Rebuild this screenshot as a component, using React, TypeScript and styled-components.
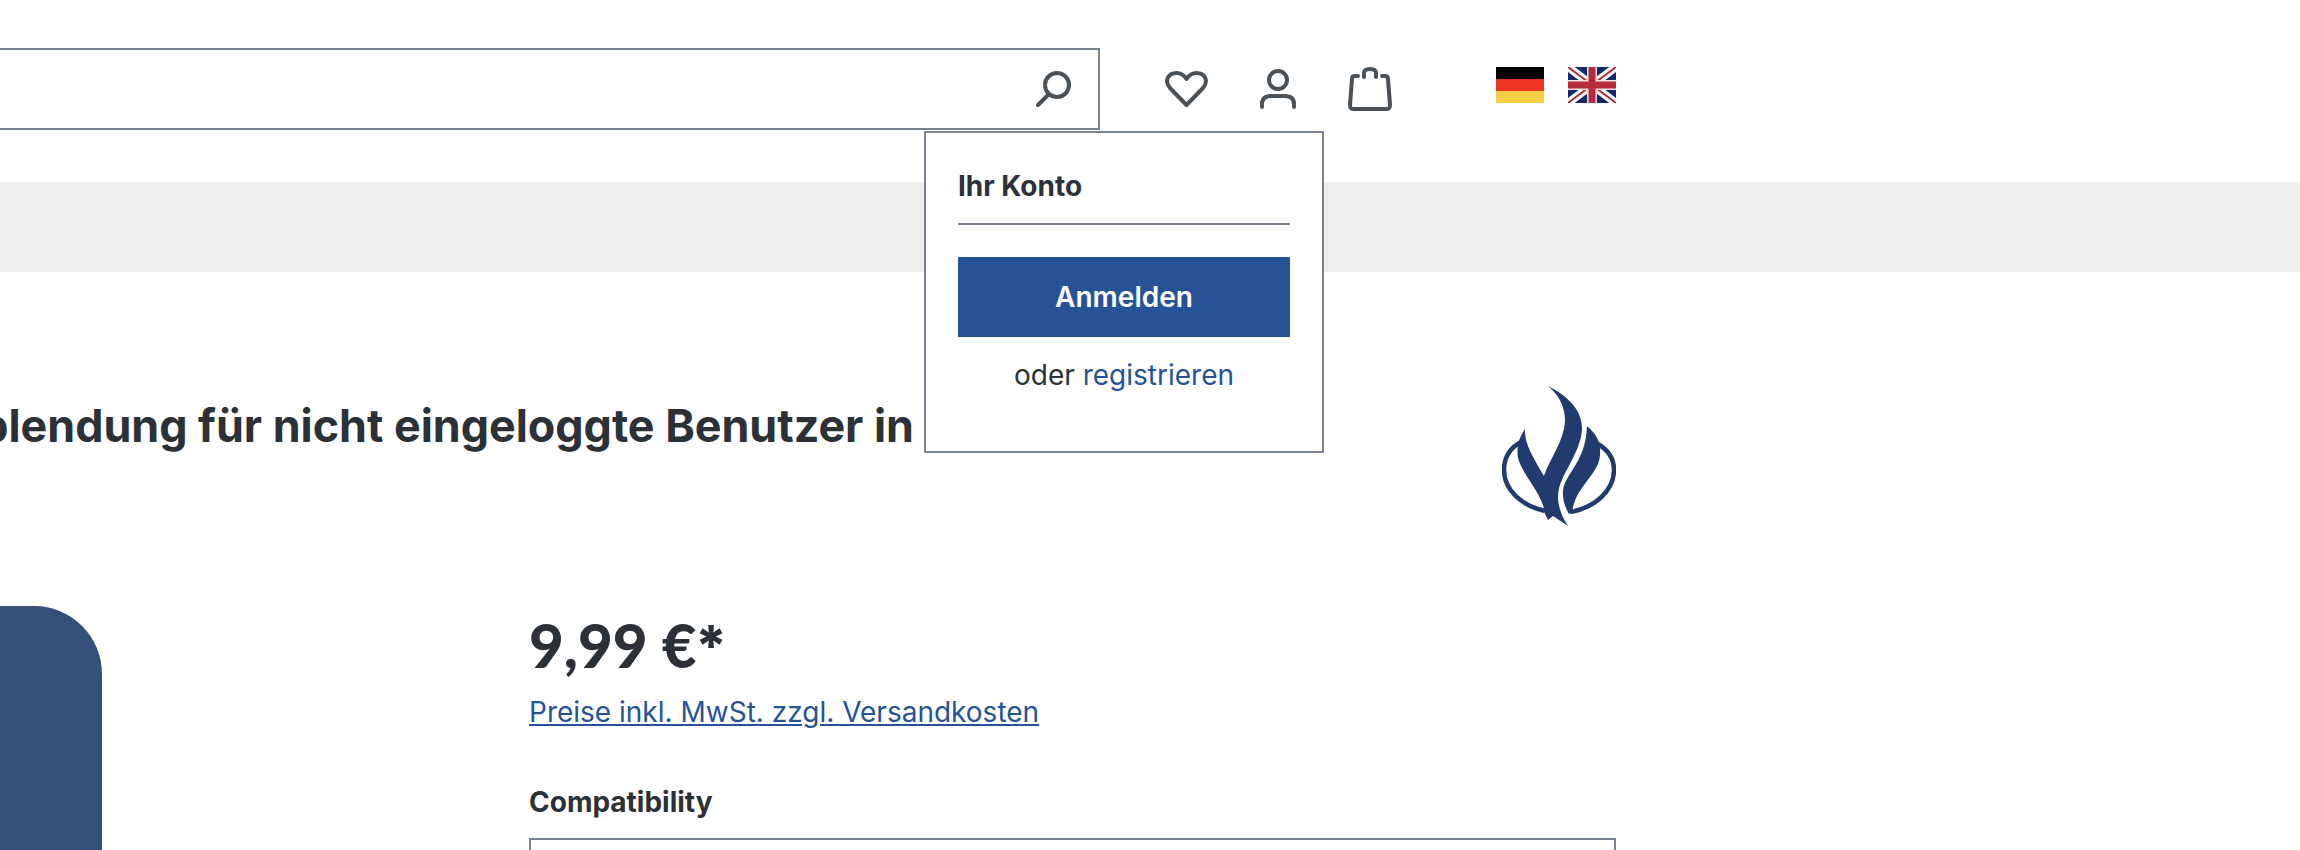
import React from "react";
import styled, { createGlobalStyle } from "styled-components";

const GlobalStyle = createGlobalStyle`
  html, body {
    margin: 0;
    padding: 0;
    background: #fff;
  }
  body {
    font-family: Inter, "Liberation Sans", sans-serif;
    color: #2b3136;
  }
`;

const Page = styled.div`
  width: 2300px;
  height: 850px;
  overflow: hidden;
  position: relative;
`;

const Header = styled.header`
  width: 1616px;
  height: 182px;
  padding-top: 48px;
  box-sizing: border-box;
  display: flex;
  align-items: flex-start;
`;

const SearchBox = styled.div`
  width: 1100px;
  height: 82px;
  flex: none;
  box-sizing: border-box;
  border: 2px solid #798490;
  border-left: 0;
  display: flex;
  align-items: center;
  justify-content: flex-end;
  padding-right: 26px;
`;

const IconRow = styled.div`
  display: flex;
  align-items: center;
  flex: none;
  height: 82px;
  margin-left: 65px;
  gap: 52px;
`;

const Flags = styled.div`
  display: flex;
  flex: none;
  gap: 24px;
  margin-left: 104px;
  margin-top: 19px;
`;

const NavBand = styled.div`
  height: 90px;
  background: #eeeeee;
`;

const Main = styled.main`
  width: 1616px;
`;

const TitleRow = styled.div`
  height: 334px;
  display: flex;
  justify-content: space-between;
  align-items: flex-start;
`;

const Title = styled.h1`
  width: 914px;
  margin: 132px 0 0;
  display: flex;
  justify-content: flex-end;
  font-size: 44.8px;
  line-height: 1;
  font-weight: 700;
  white-space: nowrap;
  color: #2b3136;
`;

const Logo = styled.svg`
  width: 114px;
  height: 140px;
  margin-top: 114px;
`;

const Product = styled.div`
  display: flex;
`;

const Gallery = styled.div`
  width: 102px;
  height: 244px;
  flex: none;
  background: #344f78;
  border-top-right-radius: 68px;
`;

const Details = styled.div`
  margin-left: 427px;
  flex: 1;
`;

const Price = styled.div`
  font-family: Lato, Inter, sans-serif;
  font-size: 60px;
  line-height: 60px;
  font-weight: 900;
  margin-top: 9px;
`;

const PriceMark = styled.span`
  font-family: Inter, sans-serif;
  font-size: 56px;
  line-height: 0;
  font-weight: 800;
  vertical-align: 2px;
  margin-left: -2px;
`;

const TaxLink = styled.a`
  display: block;
  margin-top: 19px;
  font-size: 28px;
  line-height: 36px;
  color: #265396;
  text-decoration: underline;
`;

const OptionLabel = styled.div`
  margin-top: 54px;
  font-size: 28px;
  line-height: 36px;
  font-weight: 700;
`;

const OptionSelect = styled.div`
  margin-top: 18px;
  height: 80px;
  box-sizing: border-box;
  border: 2px solid #798490;
`;

const AccountMenu = styled.div`
  position: absolute;
  left: 924px;
  top: 131px;
  width: 400px;
  height: 322px;
  box-sizing: border-box;
  background: #fff;
  border: 2px solid #798490;
  padding: 32px;
`;

const MenuTitle = styled.div`
  font-size: 28px;
  line-height: 42px;
  font-weight: 700;
  padding-bottom: 16px;
  border-bottom: 2px solid #798490;
`;

const LoginButton = styled.button`
  display: block;
  width: 100%;
  height: 80px;
  margin-top: 32px;
  border: 0;
  border-radius: 0;
  background: #265396;
  color: #fff;
  font-family: inherit;
  font-size: 28px;
  font-weight: 600;
`;

const RegisterLine = styled.div`
  margin-top: 20px;
  text-align: center;
  font-size: 28px;
  line-height: 36px;
`;

const RegisterLink = styled.a`
  color: #265396;
`;

const stroke = {
  fill: "none",
  stroke: "#4a5157",
  strokeWidth: 4,
  strokeLinecap: "round" as const,
  strokeLinejoin: "round" as const,
};

function App() {
  return (
    <Page>
      <GlobalStyle />
      <Header>
        <SearchBox>
          <svg width="36" height="36" viewBox="0 0 36 36">
            <circle cx="21" cy="14" r="12" {...stroke} />
            <path d="M12 24L2 34" {...stroke} />
          </svg>
        </SearchBox>
        <IconRow>
          <svg width="43" height="36" viewBox="0 0 43 36">
            <path
              d="M21.500 34L5 17C-1 10 3 2 11.500 2C16 2 19.500 5 21.500 8C23.500 5 27 2 31.500 2C40 2 44 10 38 17Z"
              {...stroke}
            />
          </svg>
          <svg width="36" height="40" viewBox="0 0 36 40">
            <circle cx="18" cy="11" r="9" {...stroke} />
            <path d="M2 38V35C2 29 6 27 11 27H25C30 27 34 29 34 35V38" {...stroke} />
          </svg>
          <svg width="44" height="44" viewBox="0 0 44 44">
            <path
              d="M10 9H7C5 9 4 10 4 12L2 38C2 41 3 42 6 42H38C41 42 42 41 42 38L40 12C40 10 39 9 37 9H34M16 10V6C16 3 18 2 22 2C26 2 28 3 28 6V10"
              {...stroke}
            />
          </svg>
        </IconRow>
        <Flags>
          <svg width="48" height="36" viewBox="0 0 48 36">
            <rect width="48" height="12" fill="#000" />
            <rect y="12" width="48" height="12" fill="#ee3524" />
            <rect y="24" width="48" height="12" fill="#f9cf47" />
          </svg>
          <svg width="48" height="36" viewBox="0 0 48 36">
            <rect width="48" height="36" fill="#0f2a6b" />
            <path d="M0 0L48 36M48 0L0 36" stroke="#fff" strokeWidth="8" />
            <path d="M0 0L48 36M48 0L0 36" stroke="#b72c3c" strokeWidth="2" />
            <path d="M24 0V36M0 18H48" stroke="#f3dfe1" strokeWidth="10" />
            <path d="M24 0V36M0 18H48" stroke="#b72c3c" strokeWidth="7" />
          </svg>
        </Flags>
      </Header>
      <NavBand />
      <Main>
        <TitleRow>
          <Title>blendung für nicht eingeloggte Benutzer in</Title>
          <Logo viewBox="0 0 114 140">
            <path
              fill="#213b6e"
              d="M46 0C66 10 80 24 80 42C80 60 66 80 60 94C54 106 54 122 66 140C60 136 54 132 51 130L46 134L43 128C41 108 22 92 16 72C14 60 18 50 23 43C22 56 30 70 42 90C48 72 62 56 63 34C63 20 56 8 46 0Z"
            />
            <path
              fill="#213b6e"
              d="M85 40C94 48 99 56 98 66C99 80 88 90 80 102C74 110 71 118 70 127L67 128C61 118 59 106 63 97C70 82 84 70 85 40Z"
            />
            <path
              fill="none"
              stroke="#213b6e"
              strokeWidth="4.500"
              d="M19 56C8 62 2 72 2 84C2 104 20 120 43 125M96 58C106 64 112 73 112 84C112 104 94 121 69 126"
            />
          </Logo>
        </TitleRow>
        <Product>
          <Gallery />
          <Details>
            <Price>
              9,99 €<PriceMark>*</PriceMark>
            </Price>
            <TaxLink>Preise inkl. MwSt. zzgl. Versandkosten</TaxLink>
            <OptionLabel>Compatibility</OptionLabel>
            <OptionSelect />
          </Details>
        </Product>
      </Main>
      <AccountMenu>
        <MenuTitle>Ihr Konto</MenuTitle>
        <LoginButton>Anmelden</LoginButton>
        <RegisterLine>
          oder <RegisterLink>registrieren</RegisterLink>
        </RegisterLine>
      </AccountMenu>
    </Page>
  );
}

export default App;
